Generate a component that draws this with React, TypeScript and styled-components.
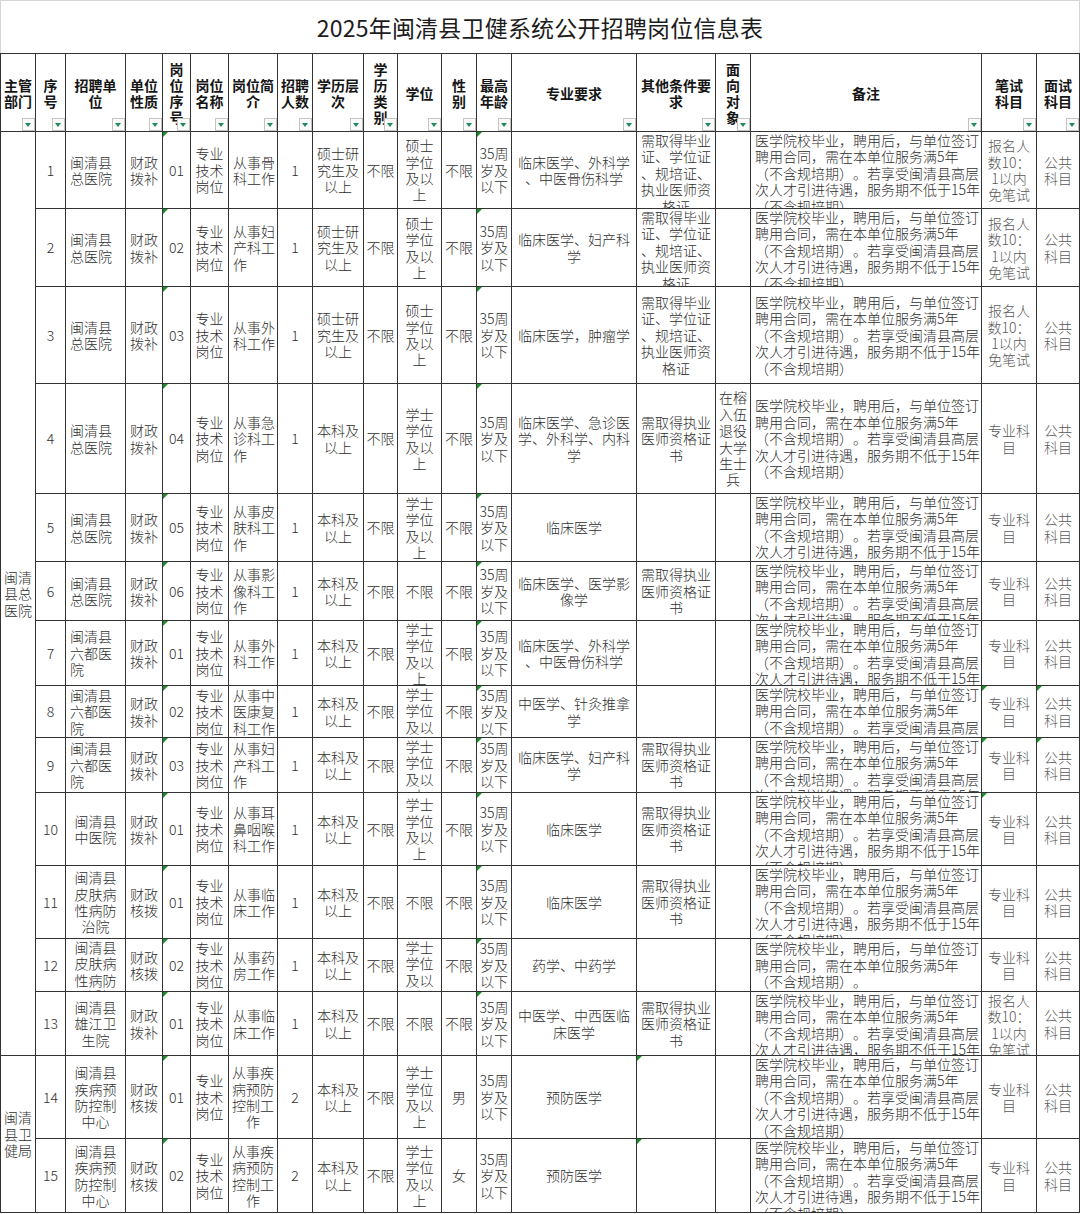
import React from 'react';
import styled, { createGlobalStyle } from 'styled-components';

const COLS = [35, 30, 60, 37, 28, 38, 49, 35, 51, 34, 44, 35, 35, 125, 79, 35, 231, 55, 43];
const ROWS = [78, 77, 78, 97, 110, 68, 59, 65, 52, 55, 73, 73, 53, 64, 83, 74];

const HEADERS = [
  '主管\n部门', '序\n号', '招聘单\n位', '单位\n性质', '岗\n位\n序\n号', '岗位\n名称', '岗位简\n介', '招聘\n人数',
  '学历层\n次', '学\n历\n类\n别', '学位', '性\n别', '最高\n年龄', '专业要求', '其他条件要\n求', '面\n向\n对\n象',
  '备注', '笔试\n科目', '面试\n科目'
];

// remark lines are broken where the sheet breaks them
const NOTE = '医学院校毕业，聘用后，与单位签订\n聘用合同，需在本单位服务满5年\n（不含规培期）。若享受闽清县高层\n次人才引进待遇，服务期不低于15年\n（不含规培期）';
const NOTE_SHORT = '医学院校毕业，聘用后，与单位签订\n聘用合同，需在本单位服务满5年\n（不含规培期）。';
const EXEMPT = '报名人数10：1以内免笔试';
const CERTS = '需取得毕业证、学位证、规培证、执业医师资格证';
const LICENSE = '需取得执业医师资格证书';

interface Job {
  no: string;
  unit: string;
  funding: string;
  post: string;
  intro: string;
  count: string;
  edu: string;
  degree: string;
  sex: string;
  major: string;
  other: string;
  target: string;
  note: string;
  written: string;
  marks: number[];
}

// marks: column indices (in full row, 0 = 主管部门) that carry the green corner flag
const JOBS: Job[] = [
  { no: '1', unit: '闽清县总医院', funding: '财政拨补', post: '01', intro: '从事骨科工作', count: '1', edu: '硕士研究生及以上', degree: '硕士学位及以上', sex: '不限', major: '临床医学、外科学、中医骨伤科学', other: CERTS, target: '', note: NOTE, written: EXEMPT, marks: [4, 12] },
  { no: '2', unit: '闽清县总医院', funding: '财政拨补', post: '02', intro: '从事妇产科工作', count: '1', edu: '硕士研究生及以上', degree: '硕士学位及以上', sex: '不限', major: '临床医学、妇产科学', other: CERTS, target: '', note: NOTE, written: EXEMPT, marks: [4, 12] },
  { no: '3', unit: '闽清县总医院', funding: '财政拨补', post: '03', intro: '从事外科工作', count: '1', edu: '硕士研究生及以上', degree: '硕士学位及以上', sex: '不限', major: '临床医学，肿瘤学', other: CERTS, target: '', note: NOTE, written: EXEMPT, marks: [4, 12] },
  { no: '4', unit: '闽清县总医院', funding: '财政拨补', post: '04', intro: '从事急诊科工作', count: '1', edu: '本科及以上', degree: '学士学位及以上', sex: '不限', major: '临床医学、急诊医学、外科学、内科学', other: LICENSE, target: '在榕入伍退役大学生士兵', note: NOTE, written: '专业科目', marks: [4, 12] },
  { no: '5', unit: '闽清县总医院', funding: '财政拨补', post: '05', intro: '从事皮肤科工作', count: '1', edu: '本科及以上', degree: '学士学位及以上', sex: '不限', major: '临床医学', other: '', target: '', note: NOTE, written: '专业科目', marks: [4, 12] },
  { no: '6', unit: '闽清县总医院', funding: '财政拨补', post: '06', intro: '从事影像科工作', count: '1', edu: '本科及以上', degree: '不限', sex: '不限', major: '临床医学、医学影像学', other: LICENSE, target: '', note: NOTE, written: '专业科目', marks: [4, 12] },
  { no: '7', unit: '闽清县六都医院', funding: '财政拨补', post: '01', intro: '从事外科工作', count: '1', edu: '本科及以上', degree: '学士学位及以上', sex: '不限', major: '临床医学、外科学、中医骨伤科学', other: '', target: '', note: NOTE, written: '专业科目', marks: [4, 12] },
  { no: '8', unit: '闽清县六都医院', funding: '财政拨补', post: '02', intro: '从事中医康复科工作', count: '1', edu: '本科及以上', degree: '学士学位及以上', sex: '不限', major: '中医学、针灸推拿学', other: '', target: '', note: NOTE, written: '专业科目', marks: [4, 12, 17, 18] },
  { no: '9', unit: '闽清县六都医院', funding: '财政拨补', post: '03', intro: '从事妇产科工作', count: '1', edu: '本科及以上', degree: '学士学位及以上', sex: '不限', major: '临床医学、妇产科学', other: LICENSE, target: '', note: NOTE, written: '专业科目', marks: [4, 12, 17, 18] },
  { no: '10', unit: '闽清县中医院', funding: '财政拨补', post: '01', intro: '从事耳鼻咽喉科工作', count: '1', edu: '本科及以上', degree: '学士学位及以上', sex: '不限', major: '临床医学', other: LICENSE, target: '', note: NOTE, written: '专业科目', marks: [4, 12, 17] },
  { no: '11', unit: '闽清县皮肤病性病防治院', funding: '财政核拨', post: '01', intro: '从事临床工作', count: '1', edu: '本科及以上', degree: '不限', sex: '不限', major: '临床医学', other: LICENSE, target: '', note: NOTE, written: '专业科目', marks: [4, 12] },
  { no: '12', unit: '闽清县皮肤病性病防治院', funding: '财政核拨', post: '02', intro: '从事药房工作', count: '1', edu: '本科及以上', degree: '学士学位及以上', sex: '不限', major: '药学、中药学', other: '', target: '', note: NOTE_SHORT, written: '专业科目', marks: [4, 12] },
  { no: '13', unit: '闽清县雄江卫生院', funding: '财政拨补', post: '01', intro: '从事临床工作', count: '1', edu: '本科及以上', degree: '不限', sex: '不限', major: '中医学、中西医临床医学', other: LICENSE, target: '', note: NOTE, written: EXEMPT, marks: [4, 12] },
  { no: '14', unit: '闽清县疾病预防控制中心', funding: '财政核拨', post: '01', intro: '从事疾病预防控制工作', count: '2', edu: '本科及以上', degree: '学士学位及以上', sex: '男', major: '预防医学', other: '', target: '', note: NOTE, written: '专业科目', marks: [4, 14] },
  { no: '15', unit: '闽清县疾病预防控制中心', funding: '财政核拨', post: '02', intro: '从事疾病预防控制工作', count: '2', edu: '本科及以上', degree: '学士学位及以上', sex: '女', major: '预防医学', other: '', target: '', note: NOTE, written: '专业科目', marks: [4, 14] },
];

const GlobalStyle = createGlobalStyle`
  html, body {
    margin: 0;
    padding: 0;
    background: #ffffff;
  }

  body {
    font-family: "Noto Sans CJK SC", "Noto Sans", sans-serif;
  }
`;

const Page = styled.div`
  width: 1080px;
  background: #ffffff;
  color: #2b2b2b;
`;

const TitleBar = styled.div`
  height: 53px;
  box-sizing: border-box;
  border: 1px solid #d6d6d6;
  border-bottom: none;
  display: flex;
  align-items: center;
  justify-content: center;
  font-size: 23px;
  font-weight: 400;
  color: #1c1c1c;
  letter-spacing: 0.2px;
`;

const Sheet = styled.div`
  display: grid;
  grid-template-columns: ${COLS.map((w) => `${w}px`).join(' ')};
  grid-template-rows: ${ROWS.map((h) => `${h}px`).join(' ')};
  border-left: 1px solid #333;
  border-top: 1px solid #333;
`;

const HeadCell = styled.div`
  position: relative;
  box-sizing: border-box;
  border-right: 1px solid #333;
  border-bottom: 1px solid #333;
  display: flex;
  align-items: center;
  justify-content: center;
  text-align: center;
  white-space: pre-line;
  overflow: hidden;
  font-size: 14px;
  line-height: 16px;
  font-weight: 700;
  color: #151515;
`;

const FilterButton = styled.span`
  position: absolute;
  right: 0;
  bottom: 0;
  width: 13px;
  height: 13px;
  box-sizing: border-box;
  border: 1px solid #c4c4c4;
  background: #fbfbfb;

  &::after {
    content: '';
    position: absolute;
    left: 2px;
    top: 4px;
    border-left: 3.5px solid transparent;
    border-right: 3.5px solid transparent;
    border-top: 4px solid #1f8a5c;
  }
`;

const Cell = styled.div<{ $align: 'left' | 'center'; $muted?: boolean; $mark?: boolean; $span?: number; $pre?: boolean }>`
  position: relative;
  box-sizing: border-box;
  border-right: 1px solid #333;
  border-bottom: 1px solid #333;
  grid-row: ${({ $span }) => ($span ? `span ${$span}` : 'auto')};
  display: flex;
  flex-direction: column;
  overflow: hidden;
  padding: ${({ $align, $muted }) => ($align === 'left' ? '0 1px 0 4px' : $muted ? '0 3px' : '0 2px')};
  text-align: ${({ $align }) => $align};
  white-space: ${({ $pre }) => ($pre ? 'pre' : 'normal')};
  font-size: 14px;
  line-height: 16.4px;
  font-weight: 300;
  color: ${({ $muted }) => ($muted ? '#5a5a5a' : '#2e2e2e')};
  word-break: break-all;
  line-break: anywhere;
  text-spacing-trim: space-all;
  font-feature-settings: "chws" 0, "halt" 0;

  &::before {
    content: '';
    display: ${({ $mark }) => ($mark ? 'block' : 'none')};
    position: absolute;
    left: 0;
    top: 0;
    border-top: 5px solid #1c8c2c;
    border-right: 5px solid transparent;
  }
`;

const CellText = styled.span`
  display: block;
  margin-top: auto;
  margin-bottom: auto;
`;

function JobRow ({ job, index }: { job: Job; index: number }): React.ReactElement {
  const lateUnit = index >= 9;
  const lateIntro = index >= 13;
  const values: { text: string; align: 'left' | 'center'; muted?: boolean; pre?: boolean }[] = [
    { text: job.no, align: 'center' },
    { text: job.unit, align: lateUnit ? 'center' : 'left' },
    { text: job.funding, align: 'center' },
    { text: job.post, align: 'center' },
    { text: '专业技术岗位', align: 'center' },
    { text: job.intro, align: lateIntro ? 'center' : 'left' },
    { text: job.count, align: 'center' },
    { text: job.edu, align: 'center' },
    { text: '不限', align: 'center' },
    { text: job.degree, align: 'center' },
    { text: job.sex, align: 'center' },
    { text: '35周岁及以下', align: 'center' },
    { text: job.major, align: 'center' },
    { text: job.other, align: 'center' },
    { text: job.target, align: 'center' },
    { text: job.note, align: 'left', pre: true },
    { text: job.written, align: 'center', muted: true },
    { text: '公共科目', align: 'center', muted: true },
  ];

  return (
    <>
      {values.map((v, i) => (
        <Cell
          $align={v.align}
          $mark={job.marks.includes(i + 1)}
          $muted={v.muted}
          $pre={v.pre}
          key={i}
        >
          <CellText>{v.text}</CellText>
        </Cell>
      ))}
    </>
  );
}

export default function App (): React.ReactElement {
  return (
    <Page>
      <GlobalStyle />
      <TitleBar>2025年闽清县卫健系统公开招聘岗位信息表</TitleBar>
      <Sheet>
        {HEADERS.map((h) => (
          <HeadCell key={h}>
            {h}
            <FilterButton />
          </HeadCell>
        ))}
        {JOBS.map((job, index) => (
          <React.Fragment key={job.no}>
            {index === 0 && (
              <Cell $align='center' $span={13}>
                <CellText>闽清县总医院</CellText>
              </Cell>
            )}
            {index === 13 && (
              <Cell $align='center' $span={2}>
                <CellText>闽清县卫健局</CellText>
              </Cell>
            )}
            <JobRow index={index} job={job} />
          </React.Fragment>
        ))}
      </Sheet>
    </Page>
  );
}
